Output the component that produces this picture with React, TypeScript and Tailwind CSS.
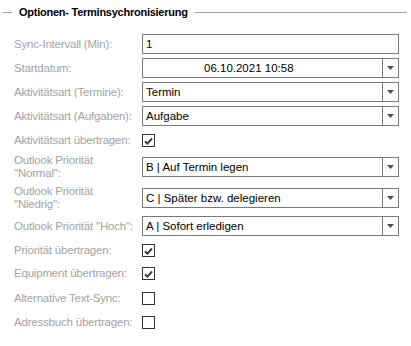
type Row =
  | { kind: 'input'; label: string[]; value: string; h: number; dropdown?: boolean; indent?: boolean }
  | { kind: 'check'; label: string[]; checked: boolean; h: number }

const ROWS: Row[] = [
  { kind: 'input', label: ['Sync-Intervall (Min):'], value: '1', h: 24 },
  { kind: 'input', label: ['Startdatum:'], value: '06.10.2021 10:58', h: 24, dropdown: true, indent: true },
  { kind: 'input', label: ['Aktivitätsart (Termine):'], value: 'Termin', h: 24, dropdown: true },
  { kind: 'input', label: ['Aktivitätsart (Aufgaben):'], value: 'Aufgabe', h: 24, dropdown: true },
  { kind: 'check', label: ['Aktivitätsart übertragen:'], checked: true, h: 25 },
  { kind: 'input', label: ['Outlook Priorität', '"Normal":'], value: 'B | Auf Termin legen', h: 28, dropdown: true },
  { kind: 'input', label: ['Outlook Priorität', '"Niedrig":'], value: 'C | Später bzw. delegieren', h: 34, dropdown: true },
  { kind: 'input', label: ['Outlook Priorität "Hoch":'], value: 'A | Sofort erledigen', h: 22, dropdown: true },
  { kind: 'check', label: ['Priorität übertragen:'], checked: true, h: 27 },
  { kind: 'check', label: ['Equipment übertragen:'], checked: true, h: 19 },
  { kind: 'check', label: ['Alternative Text-Sync:'], checked: false, h: 31 },
  { kind: 'check', label: ['Adressbuch übertragen:'], checked: false, h: 17 },
]

function Arrow() {
  return (
    <div className="w-4 h-full border-l border-[#7a7a7a] flex flex-col items-center justify-center">
      <svg width="7" height="4" viewBox="0 0 7 4">
        <path d="M0 0h7L3.5 4z" fill="#505050" />
      </svg>
    </div>
  )
}

function Tick() {
  return (
    <svg width="9" height="8" viewBox="0 0 9 8">
      <path d="M1 4.2l2.4 2.4L8 1.5" fill="none" stroke="#3a3a3a" strokeWidth="2" />
    </svg>
  )
}

export default function App() {
  return (
    <div className="w-[411px] h-[346px] bg-white text-[11.5px] leading-[13px] relative" style={{ fontFamily: '"Liberation Sans", Arial, sans-serif' }}>
      {/* Group header */}
      <div className="flex items-center h-[25px] pl-[3px] pr-[4px]">
        <div className="w-[9px] h-px bg-[#a0a0a0]" />
        <span className="px-[7px] font-bold text-black text-[11px] tracking-[-0.25px]">Optionen- Terminsychronisierung</span>
        <div className="flex-1 h-px bg-[#a0a0a0]" />
      </div>

      <div className="pt-[7px] pl-[14px]">
        {ROWS.map((row) => (
          <div key={row.label.join(' ')} className="flex items-center" style={{ height: row.h }}>
            <div className="w-[128px] text-[#a3a3a3] whitespace-nowrap tracking-[-0.2px]">
              {row.label.map((l) => (
                <div key={l}>{l}</div>
              ))}
            </div>
            {row.kind === 'input' ? (
              <div className="w-[257px] h-[20px] border border-[#7a7a7a] flex items-stretch text-black">
                <div className={`flex-1 flex items-center ${row.indent ? 'pl-[61px]' : 'pl-[3px]'}`}>{row.value}</div>
                {row.dropdown && <Arrow />}
              </div>
            ) : (
              <div className="w-[13px] h-[13px] border border-[#333] flex items-center justify-center">
                {row.checked && <Tick />}
              </div>
            )}
          </div>
        ))}
      </div>
    </div>
  )
}
